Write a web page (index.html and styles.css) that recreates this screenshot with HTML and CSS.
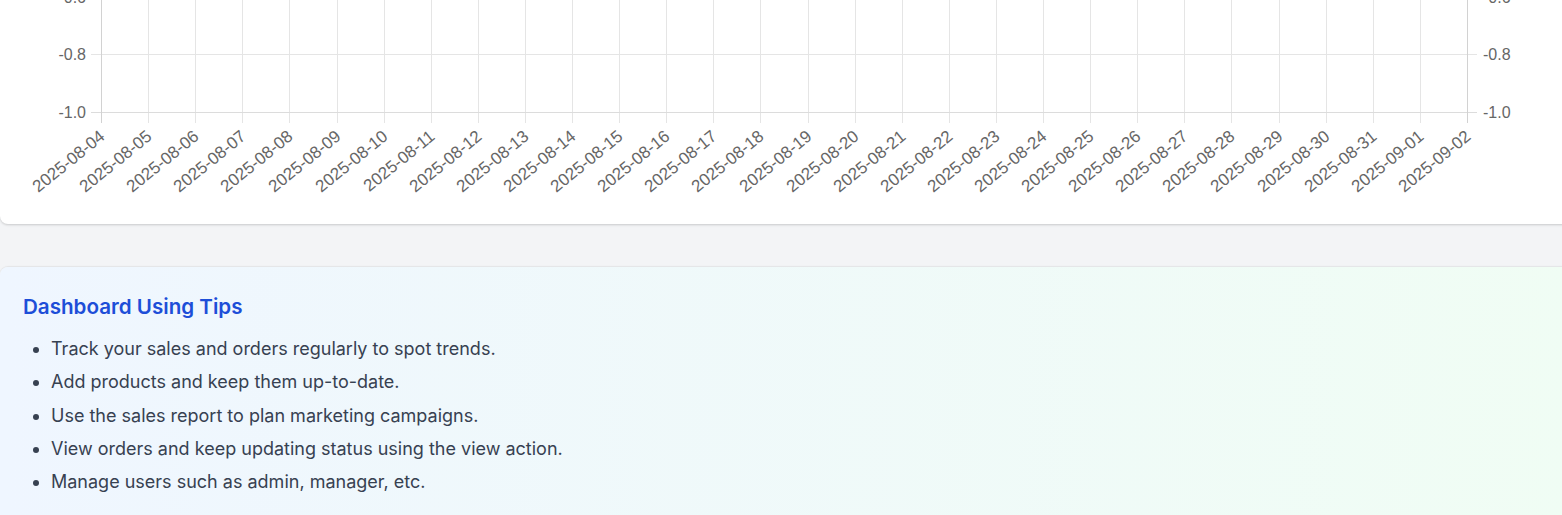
FILE: index.html
```html
<!DOCTYPE html>
<html lang="en">
<head>
<meta charset="utf-8">
<title>Dashboard</title>
<link rel="stylesheet" href="styles.css">
</head>
<body>
<main class="page">
  <section class="chart-card">
    <svg class="chart" width="1572" height="224" viewBox="0 0 1572 224" xmlns="http://www.w3.org/2000/svg">
      <g class="grid" stroke="#e5e5e5" stroke-width="1">
        <line x1="91" y1="54.5" x2="1477" y2="54.5"/>
        <line x1="91" y1="-3.5" x2="1477" y2="-3.5"/>
      </g>
      <g class="vgrid" stroke="#e5e5e5" stroke-width="1" id="vgrid"></g>
      <line x1="91" y1="112.5" x2="1477" y2="112.5" stroke="#dcdcdc"/>
      <line x1="101.5" y1="0" x2="101.5" y2="123" stroke="#d2d2d2"/>
      <line x1="1467.5" y1="0" x2="1467.5" y2="123" stroke="#d2d2d2"/>
      <g class="ylabels" font-family="Liberation Sans, Arial, sans-serif" font-size="16" fill="#666" dominant-baseline="central">
        <text x="86" y="-3" text-anchor="end">-0.6</text>
        <text x="86" y="54" text-anchor="end">-0.8</text>
        <text x="86" y="112" text-anchor="end">-1.0</text>
        <text x="1483" y="-3">-0.6</text>
        <text x="1483" y="54">-0.8</text>
        <text x="1483" y="112">-1.0</text>
      </g>
      <g id="xlabels" font-family="Liberation Sans, Arial, sans-serif" font-size="17" fill="#666" text-anchor="end" dominant-baseline="central"></g>
    </svg>
  </section>

  <section class="tips-card">
    <h2 class="tips-title">Dashboard Using Tips</h2>
    <ul class="tips-list">
      <li>Track your sales and orders regularly to spot trends.</li>
      <li>Add products and keep them up-to-date.</li>
      <li>Use the sales report to plan marketing campaigns.</li>
      <li>View orders and keep updating status using the view action.</li>
      <li>Manage users such as admin, manager, etc.</li>
    </ul>
  </section>
</main>
<script src="chart.js"></script>
</body>
</html>
```

FILE: chart.js
```js
(function () {
  var ns = "http://www.w3.org/2000/svg";
  var vgrid = document.getElementById("vgrid");
  var labels = document.getElementById("xlabels");
  var start = new Date(Date.UTC(2025, 7, 4));
  var x0 = 101, x1 = 1467, n = 30;
  var step = (x1 - x0) / (n - 1);
  for (var i = 0; i < n; i++) {
    var x = Math.round(x0 + i * step) + 0.5;
    if (i > 0 && i < n - 1) {
      var l = document.createElementNS(ns, "line");
      l.setAttribute("x1", x); l.setAttribute("x2", x);
      l.setAttribute("y1", 0); l.setAttribute("y2", 123);
      vgrid.appendChild(l);
    }
    var d = new Date(start.getTime() + i * 86400000);
    var s = d.toISOString().slice(0, 10);
    var t = document.createElementNS(ns, "text");
    var px = x + 1, py = 134;
    t.setAttribute("transform", "translate(" + px + "," + py + ") rotate(-39)");
    t.textContent = s;
    labels.appendChild(t);
  }
})();
```

FILE: styles.css
```css
html, body {
  margin: 0;
  padding: 0;
}

body {
  background: #f3f4f6;
  overflow-x: hidden;
  font-family: "Inter", "Noto Sans", sans-serif;
}

.page {
  display: flex;
  flex-direction: column;
  gap: 43px;
  margin-right: -12px;
}

.chart-card {
  background: #ffffff;
  border-radius: 0 0 8px 8px;
  box-shadow: 0 1px 3px rgba(0, 0, 0, 0.12), 0 1px 2px rgba(0, 0, 0, 0.06);
  height: 224px;
  overflow: hidden;
}

.chart {
  display: block;
}

.tips-card {
  background: linear-gradient(to right, #eff6ff, #f0fdf4);
  border-radius: 8px 8px 0 0;
  box-shadow: 0 0 0 1px rgba(0, 0, 0, 0.035), 0 -1px 2px rgba(0, 0, 0, 0.03);
  padding: 26px 23px 40px;
}

.tips-title {
  margin: 0;
  font-size: 20.6px;
  line-height: 28px;
  font-weight: 600;
  color: #1d4ed8;
}

.tips-list {
  margin: 14px 0 0;
  padding-left: 28px;
  color: #374151;
  font-size: 18px;
  line-height: 27px;
}

.tips-list li {
  margin-bottom: 6.25px;
}
```
